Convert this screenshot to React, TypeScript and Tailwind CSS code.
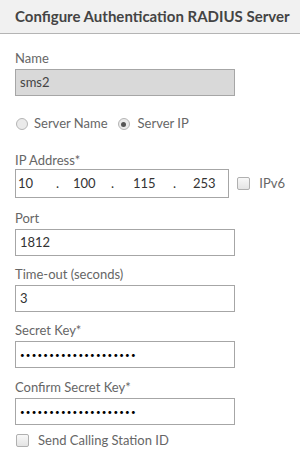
import React from 'react';

const font = { fontFamily: 'Lato, "Noto Sans", sans-serif' };

const Field: React.FC<{ label: string; value: string; disabled?: boolean; dots?: boolean; className?: string }> = ({ label, value, disabled, dots, className }) => (
  <div className={className}>
    <div className="text-[13px] leading-[16px] text-[#666]">{label}</div>
    <div
      className={`mt-[3px] w-[220px] h-[27px] border border-[#a6a6a6] flex items-center pl-[4px] text-[13px] ${
        disabled ? 'bg-[#d9d9d9] text-[#444]' : 'bg-white text-[#333]'
      }`}
    >
      {dots ? (
        <span className="text-[8px] tracking-[1.2px] text-black">{'•'.repeat(20)}</span>
      ) : (
        value
      )}
    </div>
  </div>
);

const Radio: React.FC<{ checked?: boolean }> = ({ checked }) => (
  <span className="w-[12px] h-[12px] rounded-full border border-[#b5b5b5] bg-[#eaeaea] flex items-center justify-center">
    {checked && <span className="w-[5px] h-[5px] rounded-full bg-[#555]" />}
  </span>
);

const Checkbox: React.FC = () => (
  <span className="w-[13px] h-[13px] rounded-[2px] border border-[#b0b0b0] bg-gradient-to-b from-[#f8f8f8] to-[#e4e4e4] inline-block" />
);

export default function App() {
  return (
    <div className="w-[300px] h-[460px] bg-white overflow-hidden" style={font}>
      <div className="h-[34px] bg-[#f1f1f1] border-b border-[#b4b4b4] flex items-center px-[15px]">
        <span className="text-[15px] font-bold text-[#444] whitespace-nowrap">Configure Authentication RADIUS Server</span>
      </div>
      <div className="px-[15px] pt-[16px]">
        <Field label="Name" value="sms2" disabled />
        <div className="flex items-center h-[16px] mt-[20px] text-[13px] text-[#666]">
          <span className="ml-[1px]"><Radio /></span>
          <span className="ml-[6px]">Server Name</span>
          <span className="ml-[10px]"><Radio checked /></span>
          <span className="ml-[8px]">Server IP</span>
        </div>
        <div className="mt-[20px] text-[13px] leading-[16px] text-[#666]">IP Address*</div>
        <div className="mt-[1px] flex items-center">
          <div className="w-[220px] h-[29px] border border-[#a6a6a6] flex items-center text-[13px] text-[#333]">
            <span className="w-[40px] pl-[2px]">10</span>
            <span className="w-[17px]">.</span>
            <span className="w-[38px]">100</span>
            <span className="w-[22px]">.</span>
            <span className="w-[40px]">115</span>
            <span className="w-[20px]">.</span>
            <span>253</span>
          </div>
          <span className="ml-[8px] flex"><Checkbox /></span>
          <span className="ml-[9px] text-[13px] text-[#666]">IPv6</span>
        </div>
        <Field className="mt-[12px]" label="Port" value="1812" />
        <Field className="mt-[10px]" label="Time-out (seconds)" value="3" />
        <Field className="mt-[10px]" label="Secret Key*" value="" dots />
        <Field className="mt-[11px]" label="Confirm Secret Key*" value="" dots />
        <div className="flex items-center mt-[9px] h-[13px]">
          <span className="ml-[1px] flex"><Checkbox /></span>
          <span className="ml-[9px] text-[13px] text-[#666]">Send Calling Station ID</span>
        </div>
      </div>
    </div>
  );
}
